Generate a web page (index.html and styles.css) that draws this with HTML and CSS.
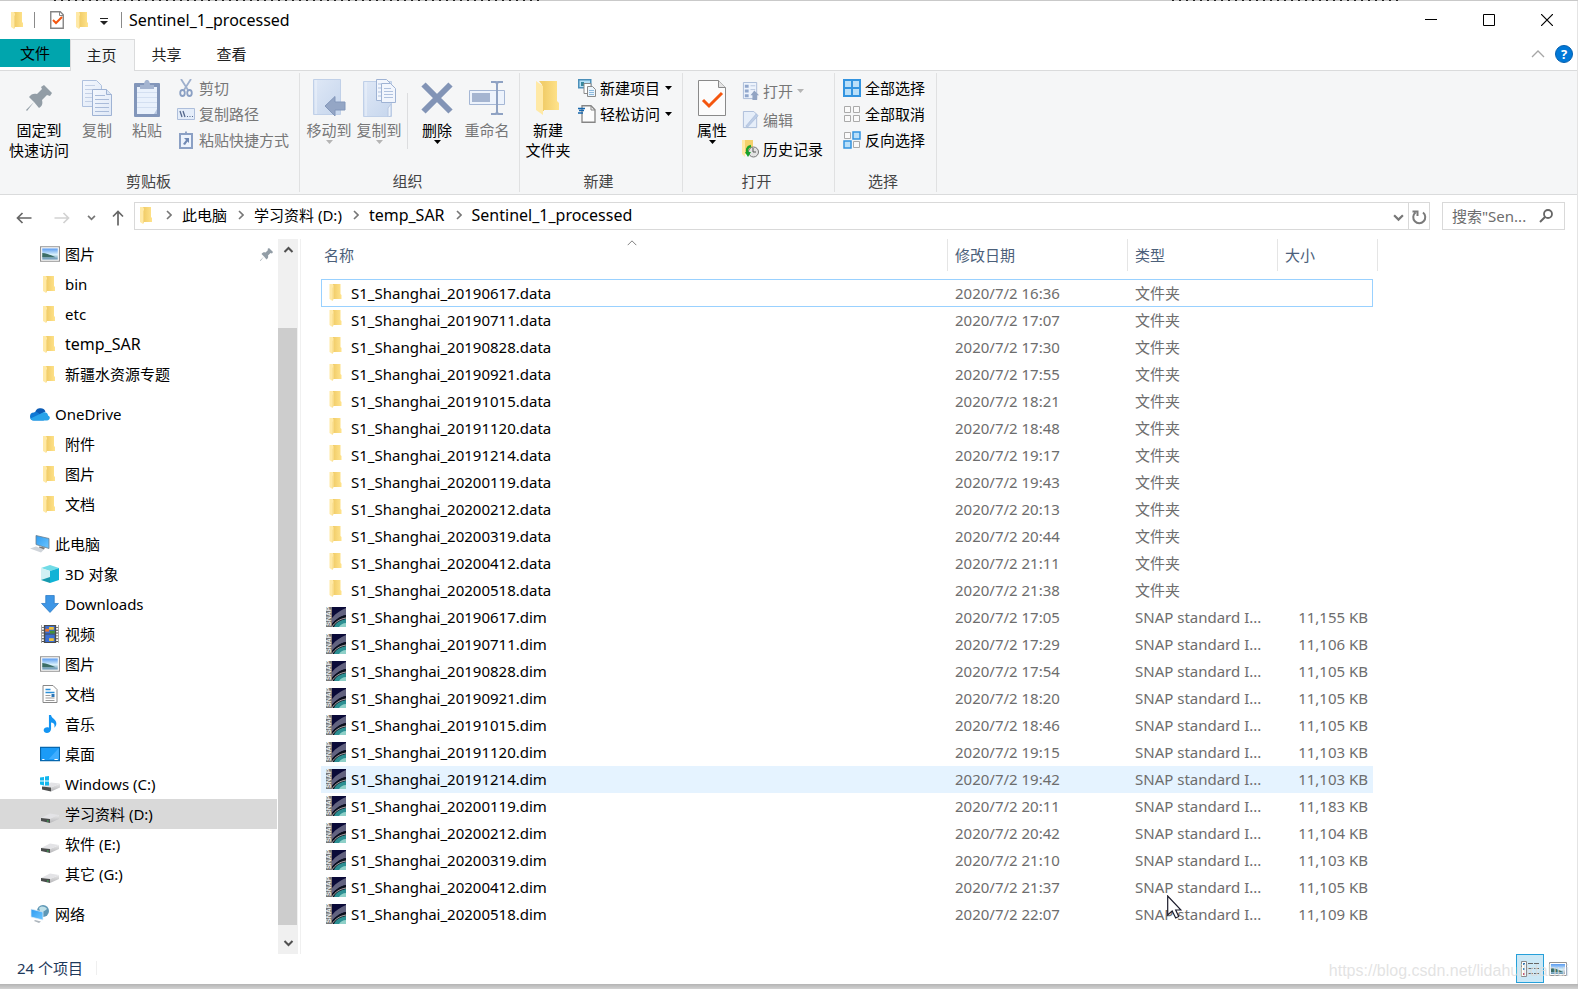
FILE: index.html
```html
<!DOCTYPE html>
<html lang="zh-CN">
<head>
<meta charset="utf-8">
<title>Sentinel_1_processed</title>
<link rel="stylesheet" href="styles.css">
</head>
<body>
<svg class="sprite" aria-hidden="true">
  <defs>
    <linearGradient id="gFolder" x1="0" y1="0" x2="1" y2="0"><stop offset="0" stop-color="#f0cb66"/><stop offset="1" stop-color="#ffe38c"/></linearGradient>
    <linearGradient id="gSky" x1="0" y1="0" x2="0" y2="1"><stop offset="0" stop-color="#5a9bf0"/><stop offset=".55" stop-color="#d8f0fb"/><stop offset="1" stop-color="#5f8fae"/></linearGradient>
    <linearGradient id="gPage" x1="0" y1="0" x2="1" y2="1"><stop offset="0" stop-color="#f4f8fe"/><stop offset="1" stop-color="#dfe8f6"/></linearGradient>
    <linearGradient id="gBook" x1="0" y1="0" x2="1" y2="1"><stop offset="0" stop-color="#dfe8f6"/><stop offset="1" stop-color="#c6d6ed"/></linearGradient>
    <linearGradient id="gScreen" x1="0" y1="0" x2="1" y2="1"><stop offset="0" stop-color="#2f9bf0"/><stop offset="1" stop-color="#6cc6ff"/></linearGradient>
    <linearGradient id="gDrive" x1="0" y1="0" x2="0" y2="1"><stop offset="0" stop-color="#e9e9ea"/><stop offset="1" stop-color="#b5b5b8"/></linearGradient>
    <symbol id="folder" viewBox="0 0 12 17"><path d="M3 0h8v10l1 1v4H3z" fill="url(#gFolder)"/><path d="M0 0h3l1 1.500v13L3 17 0 15z" fill="#ffe9a6"/><path d="M3 4l1-1v12l-1 2z" fill="#f7d983"/></symbol>
    <symbol id="folder-big" viewBox="0 0 24 35"><path d="M6 0h15v20l2 2v7H6z" fill="url(#gFolder)"/><path d="M3 0h5v30H7V5z" fill="#f2ce6b"/><path d="M0 0l7 5v29L0 29z" fill="#ffe9a6"/></symbol>
    <symbol id="check-page" viewBox="0 0 28 36"><path d="M.5.5h20l7 7v28H.5z" fill="#fcfcfc" stroke="#8a8a8a"/><path d="M20.500.500v7h7" fill="#e4e4e4" stroke="#8a8a8a"/><path d="M5 20l6 6L24 13" fill="none" stroke="#f4560f" stroke-width="3"/></symbol>
    <symbol id="check-small" viewBox="0 0 14 18"><path d="M.75.75h9.500l3 3v13.500H.75z" fill="#fff" stroke="#858585" stroke-width="1.400"/><path d="M9.500 1v3.500H13" fill="none" stroke="#858585"/><path d="M3 9l3 3 6-6" fill="none" stroke="#f4560f" stroke-width="2"/></symbol>
    <symbol id="pin" viewBox="0 0 26 26"><path d="M18 0l8 8-2 3-3-1-5 5c1 4 0 6-3 8l-5-6-7 9-1-1 8-8-5-5c2-3 5-4 8-3l5-5-1-2z" fill="#929da6"/></symbol>
    <symbol id="copy" viewBox="0 0 30 36"><path d="M.5.5h14l5 5v21H.5z" fill="url(#gPage)" stroke="#afc1de"/><path d="M3 5.500h10M3 9.500h12M3 13.500h12M3 17.500h12M3 21.500h12" stroke="#c3d0e6"/><path d="M10.500 9.500h14l5 5v21h-19z" fill="url(#gPage)" stroke="#9fb3d4"/><path d="M24.500 9.500v5h5" fill="#dae5f4" stroke="#9fb3d4"/><path d="M13 15.500h10M13 19.500h14M13 23.500h14M13 27.500h14M13 31.500h14" stroke="#a9bbd9"/></symbol>
    <symbol id="paste" viewBox="0 0 26 37"><rect y="3" width="26" height="34" rx="1" fill="#8296ba"/><path d="M3 7h20v27H3z" fill="#e9f1fc"/><path d="M20 34h3v-5z" fill="#b8c8e2"/><path d="M3 12.500h20M3 17.500h20M3 22.500h20M3 27.500h20" stroke="#d3dff1"/><path d="M6 9V5h4c0-7 6-7 6 0h4v4z" fill="#a4b4d0"/></symbol>
    <symbol id="scissors" viewBox="0 0 14 18"><path d="M2 0l7 11M12 0L5 11" stroke="#9eb0cd" stroke-width="1.800"/><g fill="none" stroke="#8ba0c4" stroke-width="1.800"><ellipse cx="3.500" cy="14" rx="2.300" ry="3"/><ellipse cx="10.500" cy="14" rx="2.300" ry="3"/></g></symbol>
    <symbol id="path" viewBox="0 0 18 12"><path d="M.5.5h17v11H.5z" fill="#e4edf9" stroke="#adbedb"/><path d="M3 3l2 6M6 3l2 6" stroke="#55698d" stroke-width="1.300"/><path d="M10 8.500h1M12.500 8.500h1M15 8.500h1" stroke="#55698d"/></symbol>
    <symbol id="shortcut" viewBox="0 0 14 18"><path d="M1 3h12v14H1z" fill="#edf3fc" stroke="#8ba0c4" stroke-width="2"/><path d="M4 4V2h2c0-2.500 2-2.500 2 0h2v2z" fill="#8ba0c4"/><path d="M5 7h5v5L8.500 10.500 6 14 4 13l3-4z" fill="#6f88b3"/></symbol>
    <symbol id="move" viewBox="0 0 33 38"><path d="M.5.5h27v35H.5z" fill="url(#gBook)" stroke="#c0d0e8"/><path d="M3 1v34" stroke="#edf3fb"/><path d="M12 27l10-9.500V23h10v8H22v6z" fill="#94a6c5" stroke="#8397ba"/></symbol>
    <symbol id="copyto" viewBox="0 0 33 38"><path d="M.5 2.500h28v35H.5z" fill="url(#gBook)" stroke="#c0d0e8"/><path d="M3 3v34" stroke="#edf3fb"/><path d="M13.500.500h10l4 4v17h-14z" fill="#f2f6fd" stroke="#9fb3d4"/><path d="M18.500 4.500h9l5 5v14h-14z" fill="#f2f6fd" stroke="#9fb3d4"/><path d="M21 9.500h7M21 12.500h9M21 15.500h9M21 18.500h9M15 5h3M15 9h3M15 13h3M15 17h3" stroke="#afc1de"/><path d="M25 38v-9l3-4v12z" fill="#edf3fb" stroke="#b8c8e2"/></symbol>
    <symbol id="delete" viewBox="0 0 32 32"><path d="M2.500 2.500l27 27M29.500 2.500l-27 27" stroke="#8294b6" stroke-width="6"/></symbol>
    <symbol id="rename" viewBox="0 0 36 34"><path d="M.5 9.500h35v14H.5z" fill="#edf3fc" stroke="#a5b7d5"/><path d="M3 12h18v9H3z" fill="#a5b5d1"/><path d="M22 1h5l1 2 1-2h5M28 2v30M22 33h5l1-2 1 2h5" fill="none" stroke="#8fa2c3" stroke-width="2"/></symbol>
    <symbol id="newitem" viewBox="0 0 18 18"><path d="M.75.750h12v8h-12z" fill="#b7e1f7" stroke="#4b8fb9" stroke-width="1.500"/><path d="M3 3h3v4H3z" fill="#39889d"/><path d="M6 4.500h7v10H6z" fill="#fff" stroke="#8a8a8a"/><path d="M9.500 7.500h5l3 3v7h-8z" fill="#eaf4fc" stroke="#8a8a8a"/><path d="M11 11.500h5M11 13.500h5M11 15.500h5" stroke="#8db9dd"/></symbol>
    <symbol id="easy" viewBox="0 0 18 18"><path d="M4 .75h9l4 4v12.500H4z" fill="#fcfcfc" stroke="#858585" stroke-width="1.300"/><path d="M13 1v4h4" fill="none" stroke="#858585"/><path d="M0 3.500h7M1 5.500h5M0 8h5" stroke="#1767ad" stroke-width="1.400"/></symbol>
    <symbol id="openico" viewBox="0 0 17 19"><path d="M.5.500h14v17H.5z" fill="#edf3fc" stroke="#a9bad7"/><path d="M2 3h4v3H2zM2 8h4v3H2zM2 13h4v3H2z" fill="#91a7cc"/><path d="M8 4h5M8 8h5" stroke="#b6c5de"/><path d="M8 14l4-5 5 5h-2v5h-5v-5z" fill="#92a4c3"/></symbol>
    <symbol id="edit" viewBox="0 0 17 19"><path d="M.5.500h11l3 3v14H.5z" fill="#e6eef9" stroke="#abbcd9"/><path d="M3 16L14 3l2 2L5 17z" fill="#bdcde6" stroke="#a2b5d4" stroke-width=".6"/></symbol>
    <symbol id="history" viewBox="0 0 18 18"><path d="M0 0h3v17l-3-3z" fill="#ffe9a6"/><path d="M3 0h8v14H3z" fill="#f4d16c"/><circle cx="11.500" cy="12" r="5" fill="#e2e2e2" stroke="#777"/><path d="M11 8v4h3" fill="none" stroke="#555"/><path d="M9 6c-4 1-5 4-3 8" fill="none" stroke="#18a22c" stroke-width="2.500"/><path d="M3 12h6l-3 5z" fill="#18a22c"/></symbol>
    <symbol id="selall" viewBox="0 0 18 18"><path d="M1 1h16v16H1zM9 1v16M1 9h16" fill="#b9dff9" stroke="#3394e0" stroke-width="2"/></symbol>
    <symbol id="selnone" viewBox="0 0 18 18"><path d="M1.500 1.500h6v6h-6zM10.500 1.500h6v6h-6zM1.500 10.500h6v6h-6zM10.500 10.500h6v6h-6z" fill="#fafafa" stroke="#aaa"/></symbol>
    <symbol id="selinv" viewBox="0 0 18 18"><path d="M1.500 1.500h6v6h-6zM10.500 10.500h6v6h-6z" fill="#fafafa" stroke="#aaa"/><path d="M10 1h7v7h-7zM1 10h7v7H1z" fill="#b9dff9" stroke="#3394e0" stroke-width="1.500"/></symbol>
    <symbol id="picture" viewBox="0 0 18 14"><path d="M.5.500h17v13H.5z" fill="#fff" stroke="#939393"/><path d="M2 2h14v10H2z" fill="url(#gSky)"/><path d="M2 6c4 0 8 2 12 4H2z" fill="#3c6e66"/></symbol>
    <symbol id="cloud" viewBox="0 0 20 13"><path d="M5 6a5.500 5.500 0 0 1 10.500-2L9 8z" fill="#0a5bb5"/><path d="M4 13a4 4 0 0 1 0-8c2-1 4 0 5 1l5 7z" fill="#0f78d4"/><path d="M4 13c-1 0-3 0-3.500-2L13 5c3-1 5 1 5 3 3 1 2 5-1 5z" fill="#27a3ea"/></symbol>
    <symbol id="pc" viewBox="0 0 20 17"><path d="M6 0l13 3v10L6 9z" fill="url(#gScreen)" stroke="#6c7f8d" stroke-width=".8"/><path d="M0 13l6-2 8 3-3 3z" fill="#cfd4da"/><path d="M9 11l6 1-1 2-5-2z" fill="#777"/></symbol>
    <symbol id="cube" viewBox="0 0 18 18"><path d="M9 0l9 3-9 3-9-3z" fill="#71dbe6"/><path d="M0 3l9 3v9l-9 0z" fill="#d0f1f4"/><path d="M18 3L9 6v12l9-3z" fill="#10b3d6"/><path d="M0 15l9-3v6z" fill="#169aae"/></symbol>
    <symbol id="down" viewBox="0 0 16 17"><path d="M4 .5h8V8h4l-8 8.500L0 8h4z" fill="#3d96e6" stroke="#2878c3" stroke-width=".7"/></symbol>
    <symbol id="film" viewBox="0 0 18 19"><path d="M0 0h18v19H0z" fill="#4b4b4b"/><path d="M1.500 0v19M16.500 0v19" stroke="#fff" stroke-width="2" stroke-dasharray="2 1"/><path d="M4 1h10v8H4zM4 10h10v8H4z" fill="#3b6fd4"/><path d="M4 4h4v3H4z" fill="#e8742e"/><path d="M8 2h5v3H8zM8 14h5v3H8z" fill="#f0c23a"/><path d="M9 6h5v3H9z" fill="#449138"/></symbol>
    <symbol id="doc" viewBox="0 0 15 18"><path d="M.5.500h10l4 4v13H.5z" fill="#fff" stroke="#888"/><path d="M3 4.500h5M3 7.500h9" stroke="#2b8fd8" stroke-width="1.500"/><path d="M3 10.500h5M3 13h9M3 15.500h9" stroke="#9b9b9b"/><path d="M9 9h3v3H9z" fill="#2b76b8"/></symbol>
    <symbol id="music" viewBox="0 0 12 17"><path d="M5 0h2c0 3 5 4 5 8 0 2-1 3-2 4 1-4-1-5-3-5v6c0 5-7 5-7 1.500C0 12 3 11 5 12z" fill="#1495f2"/></symbol>
    <symbol id="desk" viewBox="0 0 18 13"><path d="M.5.500h17v12H.5z" fill="#1b9bf7" stroke="#0767ae"/><path d="M17 1L8 11h9z" fill="#3fadff"/><path d="M2 11.500h2M13 11.500h3" stroke="#fff"/></symbol>
    <symbol id="drive" viewBox="0 0 18 10"><path d="M0 5L9 .500 18 2 9 6z" fill="#e3e3e6"/><path d="M9 6l9-4v4l-9 4z" fill="url(#gDrive)"/><path d="M0 5l9 1v4L0 8z" fill="#4b4d4d"/><path d="M6 8h1.500" stroke="#31c14f"/></symbol>
    <symbol id="windrive" viewBox="0 0 20 15"><path d="M2 10l9-4 9 1-9 4z" fill="#e3e3e6"/><path d="M11 11l9-4v4l-9 4z" fill="url(#gDrive)"/><path d="M2 10l9 1v4l-9-2z" fill="#4b4d4d"/><path d="M0 1l4-.5V4H0zM5 0l4-.5V4H5zM0 5h4v4L0 8zM5 5h4v4H5z" fill="#12b7ee"/></symbol>
    <symbol id="net" viewBox="0 0 18 18"><circle cx="12" cy="6" r="6" fill="#5e97b5"/><path d="M8 3c3-3 7-1 8 1l-4 3-3-1z" fill="#bfe0e8"/><path d="M0 4l12 3v8L0 12z" fill="url(#gScreen)" stroke="#e6f1f8" stroke-width=".7"/><path d="M4 15l6 1.500-2 1.500-5-2z" fill="#aeb6bd"/></symbol>
    <symbol id="snap" viewBox="0 0 20 20"><path d="M0 0h20v20H0z" fill="#0a0a38"/><path d="M6 11C10 6 15 3 20 1v7C14 9 9 13 6 17z" fill="#62627f"/><path d="M6 17C9 13 14 9 20 8v12H6z" fill="#0c0f1c"/><path d="M8 20c2-5 7-7 12-8v8z" fill="#2d8f92"/><path d="M13 20c1-2 4-4 7-4v4z" fill="#8fd0c8"/><path d="M6 20c3-5 8-8 14-9" fill="none" stroke="#ddd6d4" stroke-width=".8"/><path d="M0 0h6v20H0z" fill="#777"/><text class="snap-text" x="-19" y="5" transform="rotate(-90)">SNAP</text></symbol>
    <symbol id="details" viewBox="0 0 18 16"><path d="M.5.500h5v15h-5z" fill="#fff" stroke="#8b8b8b"/><path d="M2 3h2M2 8h2" stroke="#3b76b0" stroke-width="2"/><path d="M2 13h2" stroke="#c8362c" stroke-width="2"/><path d="M7 2.500h5M13 2.500h5M7 7.500h5M13 7.500h5M7 12.500h5M13 12.500h5" stroke="#666"/></symbol>
    <symbol id="chev-r" viewBox="0 0 6 10"><path d="M1 1l4 4-4 4" fill="none" stroke="#777" stroke-width="1.600"/></symbol>
    <symbol id="chev-d" viewBox="0 0 10 7"><path d="M1 1l4 4 4-4" fill="none" stroke="currentColor" stroke-width="2"/></symbol>
    <symbol id="chev-u" viewBox="0 0 14 8"><path d="M1 7l6-6 6 6" fill="none" stroke="currentColor" stroke-width="1.300"/></symbol>
    <symbol id="chev-bold" viewBox="0 0 10 7"><path d="M1 6l4-4 4 4" fill="none" stroke="currentColor" stroke-width="2"/></symbol>
    <symbol id="caret" viewBox="0 0 7 4"><path d="M0 0h7L3.500 4z" fill="currentColor"/></symbol>
  </defs>
</svg>

<div class="backdrop-strip"></div>
<div class="window">
  <header class="titlebar">
    <svg class="i-folder"><use href="#folder"/></svg>
    <span class="bar"></span>
    <button class="plain" aria-label="属性"><svg class="i-check"><use href="#check-small"/></svg></button>
    <button class="plain" aria-label="新建文件夹"><svg class="i-folder"><use href="#folder"/></svg></button>
    <button class="plain" aria-label="自定义快速访问工具栏"><svg class="i-qat" viewBox="0 0 8 7"><path d="M0 .5h8" stroke="#222"/><path d="M0 3h8L4 7z" fill="#222"/></svg></button>
    <span class="bar"></span>
    <h1 class="title">Sentinel_1_processed</h1>
    <div class="winbtns">
      <button class="plain" aria-label="最小化"><svg viewBox="0 0 12 12"><path d="M0 5.500h12" stroke="#000"/></svg></button>
      <button class="plain" aria-label="最大化"><svg viewBox="0 0 12 12"><path d="M.5.500h11v11H.5z" fill="none" stroke="#000"/></svg></button>
      <button class="plain" aria-label="关闭"><svg viewBox="0 0 12 12"><path d="M0 0l12 12M12 0L0 12" stroke="#000" stroke-width="1.200"/></svg></button>
    </div>
  </header>

  <nav class="tabs">
    <button class="tab file">文件</button>
    <button class="tab active">主页</button>
    <button class="tab">共享</button>
    <button class="tab">查看</button>
    <div class="tabs-end">
      <button class="plain collapse" aria-label="折叠"><svg class="i-up"><use href="#chev-u"/></svg></button>
      <button class="help" aria-label="帮助">?</button>
    </div>
  </nav>

  <div class="ribbon">
    <section class="group g-clip">
      <div class="tools">
        <button class="big wide"><span class="pic"><svg class="s26"><use href="#pin"/></svg></span>固定到<br>快速访问</button>
        <button class="big off"><span class="pic"><svg class="s30x36"><use href="#copy"/></svg></span>复制</button>
        <button class="big off"><span class="pic"><svg class="s26x37"><use href="#paste"/></svg></span>粘贴</button>
        <div class="smalls">
          <button class="small off"><svg class="s18"><use href="#scissors"/></svg>剪切</button>
          <button class="small off"><svg class="s18"><use href="#path"/></svg>复制路径</button>
          <button class="small off"><svg class="s18"><use href="#shortcut"/></svg>粘贴快捷方式</button>
        </div>
      </div>
      <h2 class="caption">剪贴板</h2>
    </section>
    <section class="group g-org">
      <div class="tools">
        <button class="big off"><span class="pic"><svg class="s33x38"><use href="#move"/></svg></span>移动到<svg class="caret"><use href="#caret"/></svg></button>
        <button class="big off"><span class="pic"><svg class="s33x38"><use href="#copyto"/></svg></span>复制到<svg class="caret"><use href="#caret"/></svg></button>
        <span class="divider"></span>
        <button class="big"><span class="pic"><svg class="s32"><use href="#delete"/></svg></span>删除<svg class="caret"><use href="#caret"/></svg></button>
        <button class="big off"><span class="pic"><svg class="s36x34"><use href="#rename"/></svg></span>重命名</button>
      </div>
      <h2 class="caption">组织</h2>
    </section>
    <section class="group g-new">
      <div class="tools">
        <button class="big"><span class="pic"><svg class="s24x35"><use href="#folder-big"/></svg></span>新建<br>文件夹</button>
        <div class="smalls">
          <button class="small"><svg class="s18"><use href="#newitem"/></svg>新建项目<svg class="caret"><use href="#caret"/></svg></button>
          <button class="small"><svg class="s18"><use href="#easy"/></svg>轻松访问<svg class="caret"><use href="#caret"/></svg></button>
        </div>
      </div>
      <h2 class="caption">新建</h2>
    </section>
    <section class="group g-open">
      <div class="tools">
        <button class="big"><span class="pic"><svg class="s28x36"><use href="#check-page"/></svg></span>属性<svg class="caret"><use href="#caret"/></svg></button>
        <div class="smalls loose">
          <button class="small off"><svg class="s18"><use href="#openico"/></svg>打开<svg class="caret"><use href="#caret"/></svg></button>
          <button class="small off"><svg class="s18"><use href="#edit"/></svg>编辑</button>
          <button class="small"><svg class="s18"><use href="#history"/></svg>历史记录</button>
        </div>
      </div>
      <h2 class="caption">打开</h2>
    </section>
    <section class="group g-sel">
      <div class="tools">
        <div class="smalls">
          <button class="small"><svg class="s18"><use href="#selall"/></svg>全部选择</button>
          <button class="small"><svg class="s18"><use href="#selnone"/></svg>全部取消</button>
          <button class="small"><svg class="s18"><use href="#selinv"/></svg>反向选择</button>
        </div>
      </div>
      <h2 class="caption">选择</h2>
    </section>
  </div>

  <div class="addressrow">
    <div class="navbtns">
      <button class="plain" aria-label="后退"><svg class="i-arrow" viewBox="0 0 16 12"><path d="M15.500 6H1.500M6.500 1l-5 5 5 5" fill="none" stroke="#666" stroke-width="1.700"/></svg></button>
      <button class="plain" aria-label="前进"><svg class="i-arrow" viewBox="0 0 16 12"><path d="M.5 6h14M9.500 1l5 5-5 5" fill="none" stroke="#d2d2d2" stroke-width="1.700"/></svg></button>
      <button class="plain recent" aria-label="最近位置"><svg class="i-down"><use href="#chev-d"/></svg></button>
      <button class="plain up" aria-label="上移"><svg class="i-top" viewBox="0 0 12 16"><path d="M6 15.500V1.500M1 6.500l5-5 5 5" fill="none" stroke="#666" stroke-width="1.700"/></svg></button>
    </div>
    <div class="address">
      <svg class="i-folder"><use href="#folder"/></svg>
      <svg class="i-sep"><use href="#chev-r"/></svg><a class="crumb" href="#">此电脑</a>
      <svg class="i-sep"><use href="#chev-r"/></svg><a class="crumb" href="#">学习资料 (D:)</a>
      <svg class="i-sep"><use href="#chev-r"/></svg><a class="crumb latin" href="#">temp_SAR</a>
      <svg class="i-sep"><use href="#chev-r"/></svg><a class="crumb latin" href="#">Sentinel_1_processed</a>
      <button class="plain history" aria-label="以前的位置"><svg class="i-down"><use href="#chev-d"/></svg></button>
      <button class="plain refresh" aria-label="刷新"><svg class="i-refresh" viewBox="0 0 16 16"><path d="M4.500 3.500a6 6 0 1 0 7.500 0M1.500 2.500h5V7" fill="none" stroke="#7a7a7a" stroke-width="2"/></svg></button>
    </div>
    <div class="search">
      <input class="search-input" type="text" aria-label="搜索" placeholder='搜索"Sen...'>
      <svg class="i-search" viewBox="0 0 14 14"><circle cx="9" cy="5" r="4" fill="none" stroke="#666" stroke-width="1.800"/><path d="M6 8l-5 5" stroke="#666" stroke-width="2"/></svg>
    </div>
  </div>

  <div class="content">
    <aside class="sidebar">
      <ul class="tree">
        <li><a class="node" href="#"><svg><use href="#picture"/></svg>图片<svg class="pinned"><use href="#pin"/></svg></a></li>
        <li><a class="node" href="#"><svg class="fold"><use href="#folder"/></svg>bin</a></li>
        <li><a class="node" href="#"><svg class="fold"><use href="#folder"/></svg>etc</a></li>
        <li><a class="node latin" href="#"><svg class="fold"><use href="#folder"/></svg>temp_SAR</a></li>
        <li><a class="node" href="#"><svg class="fold"><use href="#folder"/></svg>新疆水资源专题</a></li>
      </ul>
      <ul class="tree">
        <li><a class="node root" href="#"><svg><use href="#cloud"/></svg>OneDrive</a></li>
        <li><a class="node" href="#"><svg class="fold"><use href="#folder"/></svg>附件</a></li>
        <li><a class="node" href="#"><svg class="fold"><use href="#folder"/></svg>图片</a></li>
        <li><a class="node" href="#"><svg class="fold"><use href="#folder"/></svg>文档</a></li>
      </ul>
      <ul class="tree">
        <li><a class="node root" href="#"><svg><use href="#pc"/></svg>此电脑</a></li>
        <li><a class="node" href="#"><svg><use href="#cube"/></svg>3D 对象</a></li>
        <li><a class="node" href="#"><svg><use href="#down"/></svg>Downloads</a></li>
        <li><a class="node" href="#"><svg><use href="#film"/></svg>视频</a></li>
        <li><a class="node" href="#"><svg><use href="#picture"/></svg>图片</a></li>
        <li><a class="node" href="#"><svg><use href="#doc"/></svg>文档</a></li>
        <li><a class="node" href="#"><svg><use href="#music"/></svg>音乐</a></li>
        <li><a class="node" href="#"><svg><use href="#desk"/></svg>桌面</a></li>
        <li><a class="node" href="#"><svg><use href="#windrive"/></svg>Windows (C:)</a></li>
        <li><a class="node current" href="#"><svg class="low"><use href="#drive"/></svg>学习资料 (D:)</a></li>
        <li><a class="node" href="#"><svg class="low"><use href="#drive"/></svg>软件 (E:)</a></li>
        <li><a class="node" href="#"><svg class="low"><use href="#drive"/></svg>其它 (G:)</a></li>
      </ul>
      <ul class="tree">
        <li><a class="node root" href="#"><svg><use href="#net"/></svg>网络</a></li>
      </ul>
    </aside>
    <div class="scrollbar">
      <svg class="i-scroll"><use href="#chev-bold"/></svg>
      <span class="thumb"></span>
      <svg class="i-scroll"><use href="#chev-d"/></svg>
    </div>
    <main class="list">
      <table class="files">
        <colgroup><col class="c-name"><col class="c-date"><col class="c-type"><col class="c-size"></colgroup>
        <thead><tr>
          <th>名称<svg class="sort"><use href="#chev-u"/></svg></th><th>修改日期</th><th>类型</th><th>大小</th>
        </tr></thead>
        <tbody id="rows"></tbody>
      </table>
    </main>
  </div>

  <footer class="status">
    <span class="count">24 个项目</span>
    <div class="views">
      <button class="plain view on" aria-label="详细信息"><svg class="i-details"><use href="#details"/></svg></button>
      <button class="plain view" aria-label="大图标"><svg class="i-large"><use href="#picture"/></svg></button>
    </div>
  </footer>
  <span class="watermark">https://blog.csdn.net/lidahuilidahui</span>
  <svg class="cursor" viewBox="0 0 15 24"><path d="M.7 1v19l4.500-4 3.500 7 3-1.500-3-6.500H14z" fill="#fff" stroke="#1b1b2b" stroke-width="1.200"/></svg>
</div>
<script src="app.js"></script>
</body>
</html>
```
FILE: styles.css
```css
* { box-sizing: border-box; }
body {
  margin: 0;
  min-height: 100vh;
  display: flex;
  flex-direction: column;
  padding-bottom: 5px;
  background: linear-gradient(to top, #d2d2d2, #b4b4b4 5px);
  font: 15px/20px "Noto Sans", "Noto Sans CJK SC", sans-serif;
  color: #000;
  overflow: hidden;
}
button, input { font: inherit; color: inherit; }
.sprite { position: absolute; width: 0; height: 0; }
svg { display: block; flex: none; }
.plain { border: 0; padding: 0; background: none; display: flex; align-items: center; justify-content: center; }
.latin { font-size: 16px; }
.snap-text { font: bold 7px "Liberation Sans", sans-serif; fill: #f0f0f0; }

.backdrop-strip { height: 1px; background: repeating-linear-gradient(90deg, #222 0 2px, #c9c9c9 2px 7px) 54px 0 / 490px 1px no-repeat, repeating-linear-gradient(90deg, #222 0 2px, #c9c9c9 2px 7px) 1172px 0 / 230px 1px no-repeat, #c9c9c9; }
.window { position: relative; flex: 1; display: flex; flex-direction: column; background: #fff; border-right: 1px solid #e4e4e4; }

.titlebar { height: 38px; display: flex; align-items: center; padding-left: 11px; }
.i-folder { width: 12px; height: 17px; }
.i-check { width: 14px; height: 18px; margin: 0 12px 0 15px; }
.i-qat { width: 8px; height: 7px; margin: 2px 13px 0 12px; }
.bar { width: 1px; height: 16px; background: #8a8a8a; }
.titlebar > .i-folder + .bar { margin-left: 11px; }
.title { margin: 0 0 0 7px; font-size: 16px; font-weight: 400; }
.winbtns { margin-left: auto; padding-right: 1px; display: flex; }
.winbtns .plain { width: 58px; height: 38px; }
.winbtns svg { width: 12px; height: 12px; }

.tabs { height: 32px; display: flex; align-items: flex-start; border-bottom: 1px solid #dadbdc; }
.tab { width: 65px; height: 31px; padding: 0 2px 2px 0; border: 0; background: none; color: #222; }
.tab.file { width: 70px; height: 28px; padding: 0; background: #00a5ad; color: #000; }
.tab.active { height: 32px; border: 1px solid #dadbdc; border-bottom: 0; background: #f5f6f7; }
.tabs-end { margin-left: auto; display: flex; align-items: center; gap: 10px; height: 30px; padding-right: 4px; }
.i-up { width: 14px; height: 8px; color: #a6a6a6; }
.help { width: 18px; height: 18px; padding: 0; border: 1px solid #0560b0; border-radius: 50%; background: #0078d7; color: #fff; font: bold 13px/16px "Open Sans", sans-serif; }

.ribbon { height: 124px; display: flex; background: #f5f6f7; border-bottom: 1px solid #dadbdc; }
.group { display: flex; flex-direction: column; justify-content: space-between; margin: 2px 0; padding-bottom: 1px; border-right: 1px solid #e0e1e2; }
.g-clip { width: 300px; padding-left: 6px; }
.g-org { width: 220px; padding-left: 4px; }
.g-new { width: 163px; padding-left: 3px; }
.g-open { width: 152px; padding-left: 4px; }
.g-sel { width: 102px; padding-left: 3px; }
.tools { display: flex; padding-top: 5px; }
.caption { margin: 0; padding-right: 8px; font-size: 15px; font-weight: 400; color: #444; text-align: center; }
.big { width: 50px; padding: 0; border: 0; background: none; align-self: flex-start; white-space: nowrap; text-align: center; }
.big.wide { width: 66px; }
.pic { display: flex; align-items: center; justify-content: center; height: 42px; padding-bottom: 2px; }
.caret { width: 7px; height: 4px; margin: 0 auto; }
.off { color: #777; }
.off .caret { color: #b5b5b5; }
.divider { width: 1px; height: 56px; margin: 15px 4px 0 3px; background: #dcdddf; }
.smalls { margin-top: -3px; padding-left: 5px; }
.small { display: flex; align-items: center; gap: 4px; height: 26px; padding: 0; border: 0; background: none; white-space: nowrap; }
.loose { padding-top: 1px; }
.loose .small { height: 29px; gap: 3px; }
.small .caret { margin-left: 1px; }
.s18 { width: 18px; height: 18px; }
.s26 { width: 26px; height: 26px; }
.s32 { width: 32px; height: 32px; }
.s30x36 { width: 30px; height: 36px; }
.s26x37 { width: 26px; height: 37px; }
.s33x38 { width: 33px; height: 38px; }
.s36x34 { width: 36px; height: 34px; }
.s24x35 { width: 24px; height: 35px; }
.s28x36 { width: 28px; height: 36px; }

.addressrow { height: 44px; display: flex; align-items: center; padding: 0 12px 2px 16px; }
.navbtns { display: flex; align-items: center; width: 118px; padding-top: 3px; }
.i-arrow { width: 16px; height: 12px; margin-right: 22px; }
.i-down { width: 11px; height: 8px; color: #777; }
.recent { margin-left: -5px; }
.recent .i-down { width: 9px; height: 6px; }
.up { margin-left: 16px; }
.i-top { width: 12px; height: 16px; }
.address { flex: 1; height: 28px; display: flex; align-items: center; padding: 0 0 2px 5px; border: 1px solid #d9d9d9; }
.i-sep { width: 6px; height: 10px; margin: 0 10px 0 14px; }
.crumb + .i-sep { margin-left: 11px; }
.crumb, .node { color: #000; text-decoration: none; }
.history { margin-left: auto; width: 20px; height: 26px; padding-top: 4px; align-self: flex-start; }
.refresh { width: 21px; height: 26px; padding-top: 2px; align-self: flex-start; border-left: 1px solid #d9d9d9; }
.i-refresh { width: 16px; height: 16px; }
.search { width: 123px; height: 28px; margin-left: 12px; display: flex; align-items: center; padding: 0 11px 0 9px; border: 1px solid #d9d9d9; }
.search-input { flex: 1; min-width: 0; padding: 0; border: 0; outline: 0; background: none; }
.search-input::placeholder { color: #6d6d6d; opacity: 1; }
.i-search { width: 14px; height: 14px; }

.content { flex: 1; display: flex; min-height: 0; }
.sidebar { width: 277px; flex: none; }
.tree { list-style: none; margin: 0 0 10px; padding: 0; }
.node { display: flex; align-items: center; height: 30px; padding-left: 40px; gap: 5px; }
.node.root { padding-left: 30px; }
.node svg { width: 20px; height: 18px; }
.node .fold { height: 17px; padding-right: 2px; }
.node .low { height: 10px; margin-top: 8px; }
.node.current { background: #d9d9d9; }
.node .pinned { width: 13px; height: 13px; margin: 0 4px 0 auto; }
.scrollbar { width: 20px; margin: 0 2px 0 1px; padding: 7px 0; display: flex; flex-direction: column; align-items: center; justify-content: space-between; background: #f0f0f0; }
.thumb { flex: 1; width: 20px; margin: 75px 0 15px; border-right: 1px solid #f0f0f0; background: #cdcdcd; }
.i-scroll { width: 11px; height: 7px; color: #505050; }

.list { flex: 1; min-width: 0; padding-left: 20px; border-left: 1px solid #f0f0f0; }
.files { width: 1052px; table-layout: fixed; border-collapse: separate; border-spacing: 0; }
.c-name { width: 627px; }
.c-date { width: 180px; }
.c-type { width: 150px; }
.files th { position: relative; height: 32px; padding: 0 0 0 7px; border-right: 1px solid #e5e5e5; font-weight: 400; text-align: left; color: #4c607a; }
.files th:first-child { padding-left: 3px; }
.files th:last-child { border-right: 0; }
.files th:last-child::after { content: ""; position: absolute; top: 0; right: -5px; width: 1px; height: 32px; background: #e5e5e5; }
.sort { position: absolute; top: 1px; left: 306px; width: 10px; height: 6px; color: #777; }
.files tbody::before { content: ""; display: block; height: 8px; }
.files td { height: 27px; padding: 0 0 2px 7px; white-space: nowrap; color: #6d6d6d; }
.files td:first-child { padding-left: 5px; color: #000; }
.files td:last-child { padding-right: 5px; text-align: right; }
.files .focused td { height: 28px; padding-bottom: 0; border: solid #99d1ff; border-width: 1px 0; }
.files .focused td:first-child { border-left-width: 1px; padding-left: 4px; }
.files .focused td:last-child { border-right-width: 1px; }
.hovered td { background: #e5f3ff; }
.fname { display: flex; align-items: center; gap: 5px; }
.ficon { width: 20px; height: 20px; }
.ficon.dir { height: 17px; padding-right: 1px; margin-bottom: 2px; }

.status { height: 30px; flex: none; display: flex; align-items: center; padding: 0 5px 1px 17px; color: #1e395b; }
.count { padding-right: 13px; border-right: 1px solid #efefef; line-height: 14px; margin-bottom: 2px; }
.views { margin-left: auto; display: flex; }
.view { width: 28px; height: 29px; }
.view.on { border: 1px solid #26a0da; background: #cbe8f6; }
.i-details { width: 18px; height: 16px; }
.i-large { width: 18px; height: 14px; }
.watermark { position: absolute; right: 8px; bottom: 3px; font: 16px/20px "Liberation Sans", sans-serif; color: rgba(220, 220, 220, .8); }
.cursor { position: absolute; left: 1167px; top: 894px; width: 15px; height: 24px; }
```
FILE: app.js
```js
const folders = [
  ["20190617", "16:36"], ["20190711", "17:07"], ["20190828", "17:30"], ["20190921", "17:55"],
  ["20191015", "18:21"], ["20191120", "18:48"], ["20191214", "19:17"], ["20200119", "19:43"],
  ["20200212", "20:13"], ["20200319", "20:44"], ["20200412", "21:11"], ["20200518", "21:38"]
];
const products = [
  ["20190617", "17:05", "11,155"], ["20190711", "17:29", "11,106"], ["20190828", "17:54", "11,105"],
  ["20190921", "18:20", "11,105"], ["20191015", "18:46", "11,105"], ["20191120", "19:15", "11,103"],
  ["20191214", "19:42", "11,103"], ["20200119", "20:11", "11,183"], ["20200212", "20:42", "11,104"],
  ["20200319", "21:10", "11,103"], ["20200412", "21:37", "11,105"], ["20200518", "22:07", "11,109"]
];

function row(icon, iconClass, name, time, type, size, state) {
  return `<tr class="${state}"><td><span class="fname"><svg class="ficon ${iconClass}"><use href="#${icon}"/></svg>${name}</span></td>` +
    `<td>2020/7/2 ${time}</td><td>${type}</td><td>${size}</td></tr>`;
}

document.getElementById("rows").innerHTML =
  folders.map(([d, t], i) => row("folder", "dir", `S1_Shanghai_${d}.data`, t, "文件夹", "", i === 0 ? "focused" : "")).join("") +
  products.map(([d, t, s]) => row("snap", "", `S1_Shanghai_${d}.dim`, t, "SNAP standard I...", `${s} KB`, d === "20191214" ? "hovered" : "")).join("");
```
